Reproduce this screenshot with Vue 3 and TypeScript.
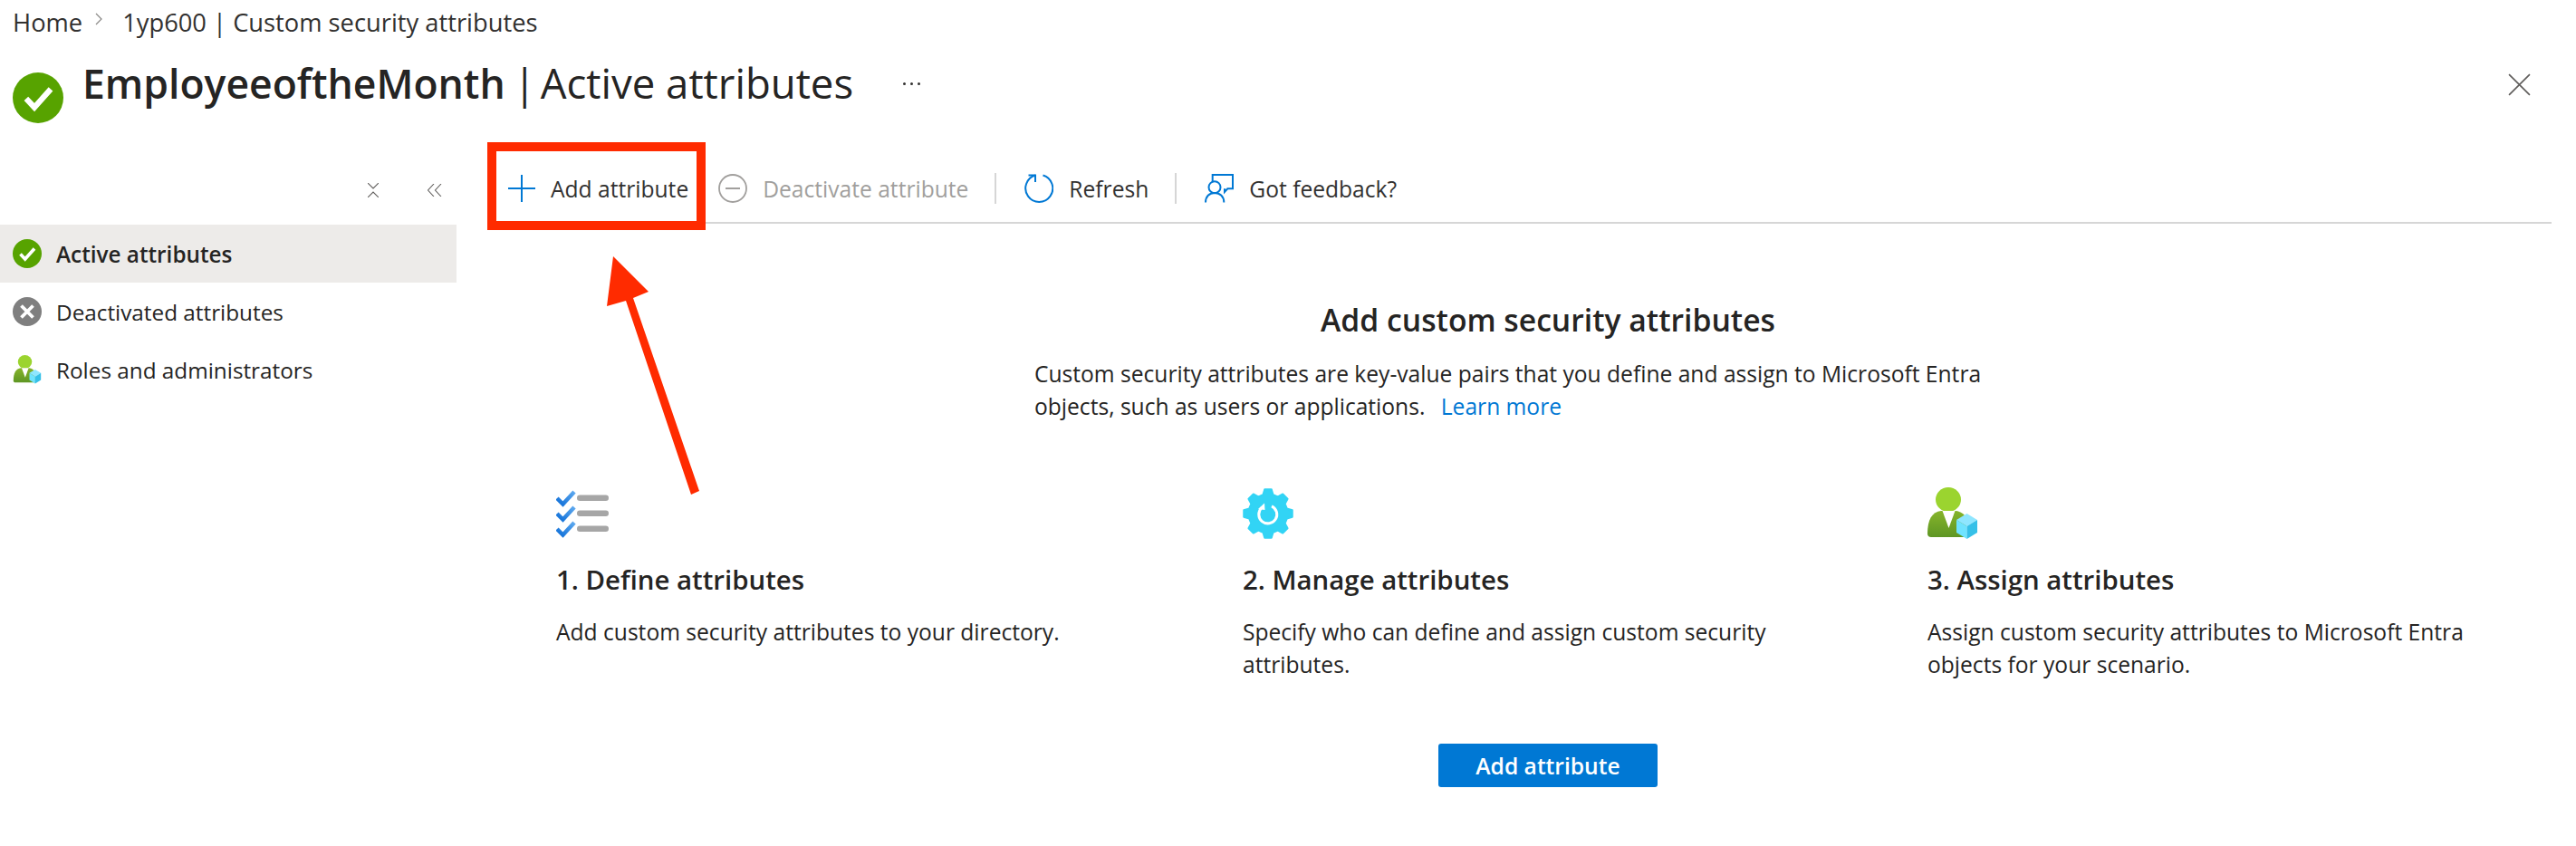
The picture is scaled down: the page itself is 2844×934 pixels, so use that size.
<script setup lang="ts">
import { computed } from 'vue'

interface NavItem {
  label: string
  icon: 'ok' | 'off' | 'roles'
  active?: boolean
}

interface Step {
  title: string
  text: string
  icon: 'list' | 'gear' | 'person'
}

const navItems: NavItem[] = [
  { label: 'Active attributes', icon: 'ok', active: true },
  { label: 'Deactivated attributes', icon: 'off' },
  { label: 'Roles and administrators', icon: 'roles' },
]

const steps: Step[] = [
  { title: '1. Define attributes', text: 'Add custom security attributes to your directory.', icon: 'list' },
  { title: '2. Manage attributes', text: 'Specify who can define and assign custom security attributes.', icon: 'gear' },
  { title: '3. Assign attributes', text: 'Assign custom security attributes to Microsoft Entra objects for your scenario.', icon: 'person' },
]

// eight teeth round the centre of a 56x57 box
const gearPath = computed(() => {
  const point = (deg: number, r: number) => {
    const a = (deg * Math.PI) / 180
    return `${(28 + r * Math.cos(a)).toFixed(2)} ${(28.5 + r * Math.sin(a)).toFixed(2)}`
  }
  let d = ''
  for (let i = 0; i < 8; i++) {
    const mid = i * 45 - 90
    d += `${i ? 'L' : 'M'}${point(mid - 15, 21.5)}L${point(mid - 8, 27)}L${point(mid + 8, 27)}L${point(mid + 15, 21.5)}`
  }
  return d + 'Z'
})
</script>

<template>
  <div class="page">
    <nav class="crumbs">
      <span>Home</span>
      <svg class="crumb-sep" viewBox="0 0 10 16"><path d="M2 2l6 6-6 6" fill="none" stroke="#8a8886" stroke-width="1.2" /></svg>
      <span>1yp600 | Custom security attributes</span>
    </nav>

    <header class="title-bar">
      <svg class="title-icon" viewBox="0 0 32 32">
        <circle cx="16" cy="16" r="16" fill="#57a300" />
        <path d="M8.5 16.5l5.2 5.5L24 10.5" fill="none" stroke="#fff" stroke-width="3.6" />
      </svg>
      <h1 class="title"><b>EmployeeoftheMonth</b><span class="pipe">|</span>Active attributes</h1>
      <span class="more">
        <i /><i /><i />
      </span>
      <svg class="close" viewBox="0 0 24 24"><path d="M1 1l22 22M23 1L1 23" fill="none" stroke="#605e5c" stroke-width="1.6" /></svg>
    </header>

    <div class="body">
      <aside class="side">
        <div class="side-tools">
          <svg class="tool-a" viewBox="0 0 12 16"><path d="M0 0l6 6 6-6M0 16l6-6 6 6" fill="none" stroke="#605e5c" stroke-width="1.1" /></svg>
          <svg class="tool-b" viewBox="0 0 16 14"><path d="M7 0L0.500 7 7 14M15 0L8.500 7 15 14" fill="none" stroke="#605e5c" stroke-width="1.1" /></svg>
        </div>
        <a v-for="item in navItems" :key="item.label" class="nav-row" :class="{ active: item.active }">
          <svg v-if="item.icon === 'ok'" class="nav-icon" viewBox="0 0 32 32">
            <circle cx="16" cy="16" r="16" fill="#57a300" />
            <path d="M8.5 16.5l5.2 5.5L24 10.5" fill="none" stroke="#fff" stroke-width="3.6" />
          </svg>
          <svg v-else-if="item.icon === 'off'" class="nav-icon" viewBox="0 0 32 32">
            <circle cx="16" cy="16" r="16" fill="#7f7f7f" />
            <path d="M9.5 9.5l13 13M22.5 9.5l-13 13" fill="none" stroke="#fff" stroke-width="3.8" />
          </svg>
          <svg v-else class="nav-icon" viewBox="0 0 55 58">
            <use href="#person-icon" />
          </svg>
          <span>{{ item.label }}</span>
        </a>
      </aside>

      <main class="main">
        <div class="toolbar">
          <button class="tool">
            <svg class="tool-icon plus" viewBox="0 0 30 30"><path d="M15 0v30M0 15h30" fill="none" stroke="#0078d4" stroke-width="2" /></svg>
            Add attribute
          </button>
          <button class="tool disabled">
            <svg class="tool-icon" viewBox="0 0 32 32"><circle cx="16" cy="16" r="15" fill="none" stroke="#a19f9d" stroke-width="1.8" /><path d="M8 16h16" stroke="#a19f9d" stroke-width="2" /></svg>
            Deactivate attribute
          </button>
          <span class="tool-sep" />
          <button class="tool">
            <svg class="tool-icon" viewBox="0 0 32 32">
              <path d="M12 1.500A15 15 0 1 0 20.500 1.500" fill="none" stroke="#0078d4" stroke-width="2" />
              <path d="M4.500 1.500H12V9" fill="none" stroke="#0078d4" stroke-width="2" />
            </svg>
            Refresh
          </button>
          <span class="tool-sep" />
          <button class="tool">
            <svg class="tool-icon" viewBox="0 0 32 32">
              <path d="M8.700 8V1H31V16.300H25.300L22 20V16.300" fill="none" stroke="#0078d4" stroke-width="2" />
              <circle cx="11" cy="14.700" r="6.500" fill="#fff" stroke="#0078d4" stroke-width="2" />
              <path d="M1 31.500C1 25 5 21 11 21S21.300 25 21.300 31.500" fill="none" stroke="#0078d4" stroke-width="2" />
            </svg>
            Got feedback?
          </button>
        </div>

        <section class="intro">
          <h2>Add custom security attributes</h2>
          <p>
            Custom security attributes are key-value pairs that you define and assign to Microsoft Entra<br />
            objects, such as users or applications.
            <a class="link">Learn more</a>
          </p>
        </section>

        <section class="steps">
          <div v-for="step in steps" :key="step.title" class="step">
            <svg v-if="step.icon === 'list'" class="step-icon list" viewBox="0 0 58 52">
              <defs>
                <linearGradient id="check-grad" x1="0" y1="1" x2="1" y2="0">
                  <stop offset="0" stop-color="#0f6fd8" />
                  <stop offset="1" stop-color="#5ea9ef" />
                </linearGradient>
              </defs>
              <g v-for="y in [0, 17, 34]" :key="y" :transform="`translate(0 ${y})`">
                <path d="M1 9l6.500 6.500L20 2" fill="none" stroke="url(#check-grad)" stroke-width="4.500" />
                <rect x="23" y="5.500" width="35" height="6.500" rx="3.200" fill="#a6a6a6" />
              </g>
            </svg>
            <svg v-else-if="step.icon === 'gear'" class="step-icon gear" viewBox="0 0 56 57">
              <path :d="gearPath" fill="#32d4f5" stroke="#32d4f5" stroke-width="2" stroke-linejoin="round" />
              <path d="M32 20.300A10 10 0 1 1 21 22" fill="none" stroke="#fff" stroke-width="3" />
              <path d="M24 17l.5 7.500-7.500-1z" fill="#fff" />
            </svg>
            <svg v-else class="step-icon person" viewBox="0 0 55 58">
              <defs>
                <linearGradient id="body-grad" x1="0" y1="0" x2="0" y2="1">
                  <stop offset="0" stop-color="#86b42a" />
                  <stop offset="1" stop-color="#5e9624" />
                </linearGradient>
              </defs>
              <g id="person-icon">
                <ellipse cx="23" cy="13.500" rx="14" ry="13.500" fill="#9bd42f" />
                <path d="M0 51c0-15 5-24 15-25h16c6 .5 10 4 12 8v21H4c-2.500 0-4-1.500-4-4z" fill="url(#body-grad)" />
                <path d="M16.500 26h14l-7 19z" fill="#fff" />
                <path d="M43.500 29L55 36 43.500 43 32 36z" fill="#8fe6ff" />
                <path d="M32 36l11.500 7v14L32 50z" fill="#6fe3ff" />
                <path d="M55 36L43.500 43v14L55 50z" fill="#36c0e8" />
              </g>
            </svg>
            <h3>{{ step.title }}</h3>
            <p>{{ step.text }}</p>
          </div>
        </section>

        <div class="cta">
          <button class="primary">Add attribute</button>
        </div>
      </main>
    </div>

    <!-- annotation drawn over the screenshot -->
    <div class="callout-box" />
    <svg class="callout-arrow" viewBox="0 0 110 270">
      <path d="M677 283L716 322L699 329L772 542L763 546L691 332L670 338Z" transform="translate(-660 -280)" fill="#ff2b00" />
    </svg>
  </div>
</template>

<style scoped>
.page {
  position: relative;
  width: 2844px;
  height: 934px;
  overflow: hidden;
  background: #fff;
  color: #252423;
  font-family: "Open Sans", "Noto Sans", sans-serif;
  font-size: 24.6px;
}

.crumbs {
  display: flex;
  align-items: center;
  height: 48px;
  padding-left: 14px;
  color: #323130;
  font-size: 27.3px;
}
.crumb-sep {
  width: 10px;
  height: 16px;
  margin: 0 21px 6px 13px;
}

.title-bar {
  display: flex;
  align-items: center;
  height: 88px;
  padding: 0 14px;
}
.title-icon {
  width: 56px;
  height: 56px;
  margin-top: 32px;
  margin-right: 21px;
}
.title {
  margin: 0;
  font-size: 45.5px;
  font-weight: 400;
  white-space: nowrap;
  padding-bottom: 2px;
}
.title b {
  font-size: 44.5px;
  font-weight: 600;
}
.pipe {
  margin: 0 5px 0 9px;
}
.more {
  display: flex;
  gap: 5px;
  margin-left: 55px;
}
.more i {
  width: 3px;
  height: 3px;
  border-radius: 50%;
  background: #323130;
}
.close {
  width: 25px;
  height: 25px;
  margin-left: auto;
  margin-right: 36px;
  margin-top: 2px;
}

.body {
  display: flex;
}

.side {
  flex: none;
  width: 504px;
}
.side-tools {
  display: flex;
  align-items: center;
  justify-content: flex-end;
  gap: 54px;
  height: 112px;
  padding: 36px 16px 0 0;
  box-sizing: border-box;
}
.tool-a {
  width: 12px;
  height: 16px;
}
.tool-b {
  width: 16px;
  height: 14px;
}
.nav-row {
  display: flex;
  align-items: center;
  gap: 16px;
  height: 64px;
  padding-left: 14px;
  font-size: 24.3px;
}
.nav-row.active {
  background: #edebe9;
  font-weight: 600;
}
.nav-icon {
  width: 32px;
  height: 32px;
  flex: none;
}

.main {
  flex: 1;
  padding: 0 27px 0 44px;
}
.toolbar {
  display: flex;
  align-items: center;
  height: 111px;
  padding-top: 35px;
  box-sizing: border-box;
  border-bottom: 2px solid #d6d6d6;
  margin-left: -4px;
}
.tool {
  display: flex;
  align-items: center;
  gap: 17px;
  border: none;
  background: none;
  padding: 0 16px 0 17px;
  font: inherit;
  color: #323130;
  white-space: nowrap;
}
.tool.disabled {
  color: #a19f9d;
}
.tool-icon {
  width: 32px;
  height: 32px;
  flex: none;
}
.tool-icon.plus {
  width: 30px;
  height: 30px;
}
.tool-sep {
  width: 2px;
  height: 34px;
  background: #d6d6d6;
  margin: 0 14px 0 13px;
}

.intro {
  width: 1118px;
  margin: 83px 0 0 602px;
}
.intro h2 {
  margin: 0 0 19px;
  font-size: 33.7px;
  font-weight: 600;
  line-height: 46px;
  text-align: center;
}
.intro p {
  margin: 0 0 0 -8px;
  line-height: 36px;
  white-space: nowrap;
}
.link {
  margin-left: 11px;
  color: #0078d4;
}

.steps {
  display: grid;
  grid-template-columns: 758px 756px 620px;
  margin-top: 71px;
  margin-left: 66px;
}
.step-icon {
  display: block;
  height: 58px;
  margin-bottom: 24px;
}
.step-icon.list {
  width: 58px;
}
.step-icon.gear {
  width: 56px;
}
.step-icon.person {
  width: 55px;
}
.step h3 {
  margin: 0 0 20px;
  font-size: 29.4px;
  font-weight: 600;
  line-height: 40px;
}
.step p {
  margin: 0;
  max-width: 620px;
  line-height: 36px;
}

.cta {
  display: flex;
  justify-content: center;
  margin-top: 69px;
  padding-left: 53px;
}
.primary {
  width: 242px;
  height: 48px;
  border: none;
  border-radius: 3px;
  background: #0078d4;
  color: #fff;
  font: inherit;
  font-weight: 600;
}

.callout-box {
  position: absolute;
  left: 538px;
  top: 157px;
  width: 241px;
  height: 97px;
  box-sizing: border-box;
  border: 10px solid #ff2b00;
}
.callout-arrow {
  position: absolute;
  left: 660px;
  top: 280px;
  width: 110px;
  height: 270px;
  overflow: visible;
}
</style>
